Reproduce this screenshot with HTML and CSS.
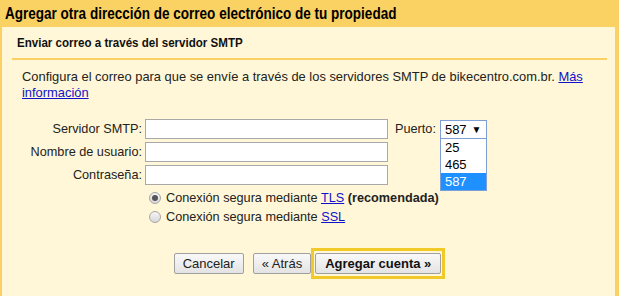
FILE: index.html
```html
<!DOCTYPE html>
<html lang="es">
<head>
    <meta charset="UTF-8">
    <title>Agregar otra dirección de correo electrónico</title>
    <link rel="stylesheet" href="styles.css">
</head>
<body>
    <div class="title"><span class="narrow">Agregar otra dirección de correo electrónico de tu propiedad</span></div>

    <div class="panel">
        <div class="subtitle"><span class="narrow sub">Enviar correo a través del servidor SMTP</span></div>

        <div class="box">
            <p class="intro">Configura el correo para que se envíe a través de los servidores SMTP de bikecentro.com.br. <a href="#">Más</a> <a href="#">información</a></p>

            <div class="fields">
                <div class="row">
                    <label class="label">Servidor SMTP:</label>
                    <input class="text" type="text">
                    <span class="port-label">Puerto:</span>
                    <div class="select">
                        <span class="value">587</span><span class="arrow">&#9660;</span>
                        <ul class="options">
                            <li>25</li>
                            <li>465</li>
                            <li class="selected">587</li>
                        </ul>
                    </div>
                </div>
                <div class="row">
                    <label class="label">Nombre de usuario:</label>
                    <input class="text" type="text">
                </div>
                <div class="row">
                    <label class="label">Contraseña:</label>
                    <input class="text" type="password">
                </div>
            </div>

            <div class="choices">
                <div class="choice"><span class="radio checked"></span><span>Conexión segura mediante <a href="#">TLS</a> <b>(recomendada)</b></span></div>
                <div class="choice"><span class="radio"></span><span>Conexión segura mediante <a href="#">SSL</a></span></div>
            </div>

            <div class="buttons">
                <button class="btn cancel">Cancelar</button>
                <button class="btn back">&laquo; Atrás</button>
                <span class="focus-ring"><button class="btn primary">Agregar cuenta &raquo;</button></span>
            </div>
        </div>
    </div>
</body>
</html>
```

FILE: styles.css
```css
body {
    margin: 0;
    font-family: 'Liberation Sans', Arial, sans-serif;
    font-size: 12.7px;
    color: #222;
    background: #fff7d7;
}
a {
    color: #1111cc;
}
.narrow {
    display: inline-block;
    transform: scaleX(0.845);
    transform-origin: left center;
    white-space: nowrap;
}
.narrow.sub {
    transform: scaleX(0.89);
}
.title {
    background-color: #fad163;
    height: 27px;
    line-height: 27px;
    padding-left: 5px;
    font-size: 16px;
    font-weight: bold;
    color: #000;
}
.panel {
    height: 269px;
    background-color: #fff7d7;
    border-left: 2px solid #fad163;
    border-right: 4px solid #fad163;
}
.subtitle {
    padding: 8px 0 0 15px;
    height: 16px;
    line-height: 16px;
    margin-bottom: 7px;
    font-size: 13px;
    font-weight: bold;
    color: #111;
}
.box {
    margin: 0 8px 0 10px;
    border-top: 2px solid #fad163;
    padding: 9px 10px 0 10px;
}
.intro {
    margin: 0;
    font-size: 12.9px;
    line-height: 16px;
}
.fields {
    margin-top: 18px;
}
.row {
    display: flex;
    align-items: center;
    height: 20px;
    margin-bottom: 3px;
}
.label {
    width: 120px;
    padding-right: 3px;
    text-align: right;
}
.text {
    box-sizing: border-box;
    width: 243px;
    height: 20px;
    margin: 0;
    border: 1px solid #a9a9a9;
    background: #fff;
}
.port-label {
    margin-left: 7px;
}
.select {
    position: relative;
    box-sizing: border-box;
    width: 47px;
    height: 19px;
    margin-left: 4px;
    border: 1px solid #7f9ed6;
    background: #fff;
    font-size: 13px;
    line-height: 17px;
    padding-left: 4px;
    color: #000;
}
.arrow {
    font-size: 10px;
    margin-left: 5px;
    vertical-align: 1px;
}
.options {
    position: absolute;
    top: 17px;
    left: -1px;
    width: 47px;
    box-sizing: border-box;
    margin: 0;
    padding: 0;
    list-style: none;
    background: #fff;
    border: 1px solid #7f9ed6;
}
.options li {
    height: 17px;
    line-height: 17px;
    padding-left: 4px;
}
.options .selected {
    background: #1e90ff;
    color: #fff;
}
.choices {
    margin-top: 2px;
    padding-left: 127px;
}
.choice {
    display: flex;
    align-items: center;
    height: 19px;
    white-space: nowrap;
}
.radio {
    position: relative;
    box-sizing: border-box;
    width: 12px;
    height: 12px;
    margin-right: 5px;
    border: 1px solid #a6a6a6;
    border-radius: 50%;
    background: linear-gradient(#f4f4f4, #d9d9d9);
}
.radio.checked::after {
    content: "";
    position: absolute;
    left: 2px;
    top: 2px;
    width: 6px;
    height: 6px;
    border-radius: 50%;
    background: #555;
}
.buttons {
    display: flex;
    justify-content: center;
    align-items: center;
    margin-top: 22px;
}
.btn {
    height: 21px;
    margin: 0;
    padding: 0 8px;
    font-family: 'Liberation Sans', Arial, sans-serif;
    font-size: 13px;
    color: #222;
    border: 1px solid #a0a0a0;
    border-radius: 2px;
    background: linear-gradient(#f9f9f9, #e3e3e3);
}
.cancel {
    margin-right: 9px;
}
.primary {
    padding: 0 9px;
    font-weight: bold;
    color: #111;
}
.focus-ring {
    display: inline-flex;
    padding: 2px 1px;
    border: 3px solid #f1c928;
}
```
